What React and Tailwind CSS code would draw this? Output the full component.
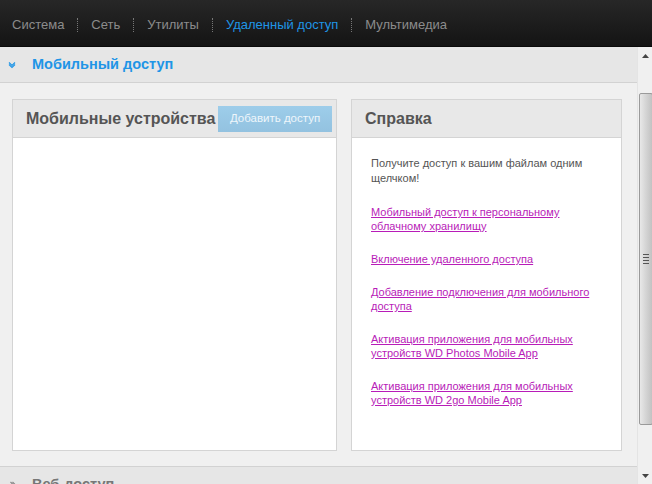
const NAV = ['Система', 'Сеть', 'Утилиты', 'Удаленный доступ', 'Мультимедиа']

const LINKS = [
  ['Мобильный доступ к персональному', 'облачному хранилищу'],
  ['Включение удаленного доступа'],
  ['Добавление подключения для мобильного', 'доступа'],
  ['Активация приложения для мобильных', 'устройств WD Photos Mobile App'],
  ['Активация приложения для мобильных', 'устройств WD 2go Mobile App'],
]

function Chevron({ down, color }) {
  return (
    <svg width="8" height="8" viewBox="0 0 8 8" className="shrink-0">
      {down ? (
        <>
          <path d="M1 1.5 L4 4.5 L7 1.5" fill="none" stroke={color} strokeWidth="1.2" />
          <path d="M1 3.5 L4 6.5 L7 3.5" fill="none" stroke={color} strokeWidth="1.2" />
        </>
      ) : (
        <>
          <path d="M1.5 1 L4.5 4 L1.5 7" fill="none" stroke={color} strokeWidth="1.2" />
          <path d="M3.5 1 L6.5 4 L3.5 7" fill="none" stroke={color} strokeWidth="1.2" />
        </>
      )}
    </svg>
  )
}

function Scrollbar() {
  return (
    <div className="w-[15px] shrink-0 bg-[#f0f0f0] border-l border-[#e4e4e4] flex flex-col items-center">
      <div className="h-[17px] flex items-center justify-center">
        <svg width="7" height="4" viewBox="0 0 7 4"><path d="M0 4 L3.5 0 L7 4 Z" fill="#444" /></svg>
      </div>
      <div className="mt-[29px] h-[332px] w-[14px] ml-[1px] rounded-[2px] border border-[#9a9a9a] bg-gradient-to-r from-[#e8e8e8] via-[#d4d4d4] to-[#c2c2c2] flex items-center justify-center">
        <div className="flex flex-col gap-[2px]">
          <div className="w-[6px] h-px bg-[#555]" />
          <div className="w-[6px] h-px bg-[#555]" />
          <div className="w-[6px] h-px bg-[#555]" />
          <div className="w-[6px] h-px bg-[#555]" />
        </div>
      </div>
      <div className="flex-1" />
      <div className="h-[17px] flex items-center justify-center">
        <svg width="7" height="4" viewBox="0 0 7 4"><path d="M0 0 L7 0 L3.5 4 Z" fill="#444" /></svg>
      </div>
    </div>
  )
}

export default function App() {
  return (
    <div className="w-[652px] h-[484px] overflow-hidden flex flex-col bg-[#f0f0f0] font-['Liberation_Sans',Arial,sans-serif]">
      <nav className="h-[47px] shrink-0 flex items-center pl-[12px] pt-[4px] bg-gradient-to-b from-[#272727] to-[#141414] border-b border-[#0a0a0a] text-[13px]">
        {NAV.map((n, i) => (
          <div key={n} className="flex items-center">
            {i > 0 && <div className="mx-[13px] h-[14px] border-l border-dotted border-[#777]" />}
            <span className={i === 3 ? 'text-[#1f95e6]' : 'text-[#8c8c8c]'}>{n}</span>
          </div>
        ))}
      </nav>

      <div className="flex-1 flex min-h-0">
        <div className="flex-1 flex flex-col min-w-0">
          <div className="h-[36px] shrink-0 flex items-center pl-[8px] gap-[16px] bg-[#e6e6e6] border-b border-[#d2d2d2]">
            <Chevron down color="#1f95e6" />
            <span className="text-[14.5px] font-bold text-[#1f95e6]">Мобильный доступ</span>
          </div>

          <div className="flex gap-[14px] pt-[16px] pl-[12px] pr-[15px]">
            <div className="w-[325px] h-[352px] flex flex-col bg-white border border-[#d4d4d4]">
              <div className="h-[38px] shrink-0 flex items-center justify-between pl-[13px] pr-[4px] bg-[#e8e8e8] border-b border-[#d4d4d4]">
                <span className="text-[16px] font-bold text-[#555] whitespace-nowrap">Мобильные устройства</span>
                <button className="shrink-0 h-[26px] w-[114px] bg-gradient-to-b from-[#9dcdea] to-[#93c2e0] text-[11.5px] text-[#eef6fb]">
                  Добавить доступ
                </button>
              </div>
            </div>

            <div className="flex-1 h-[352px] flex flex-col bg-white border border-[#d4d4d4]">
              <div className="h-[38px] shrink-0 flex items-center pl-[13px] bg-[#e8e8e8] border-b border-[#d4d4d4]">
                <span className="text-[16px] font-bold text-[#555]">Справка</span>
              </div>
              <div className="pl-[19px] pr-[10px] pt-[18px] text-[11px] leading-[15px]">
                <p className="text-[#555]">
                  Получите доступ к вашим файлам одним
                  <br />
                  щелчком!
                </p>
                {LINKS.map((l, i) => (
                  <p key={i} className="mt-[19px] leading-[14px]">
                    <a href="#" className="text-[#b81cb8] underline">
                      {l[0]}
                      {l[1] && <br />}
                      {l[1]}
                    </a>
                  </p>
                ))}
              </div>
            </div>
          </div>

          <div className="mt-[15px] h-[36px] shrink-0 flex items-center pl-[9px] gap-[15px] bg-[#e6e6e6] border-t border-[#d2d2d2]">
            <Chevron color="#888" />
            <span className="text-[14.5px] font-bold text-[#777]">Веб-доступ</span>
          </div>
        </div>
        <Scrollbar />
      </div>
    </div>
  )
}
